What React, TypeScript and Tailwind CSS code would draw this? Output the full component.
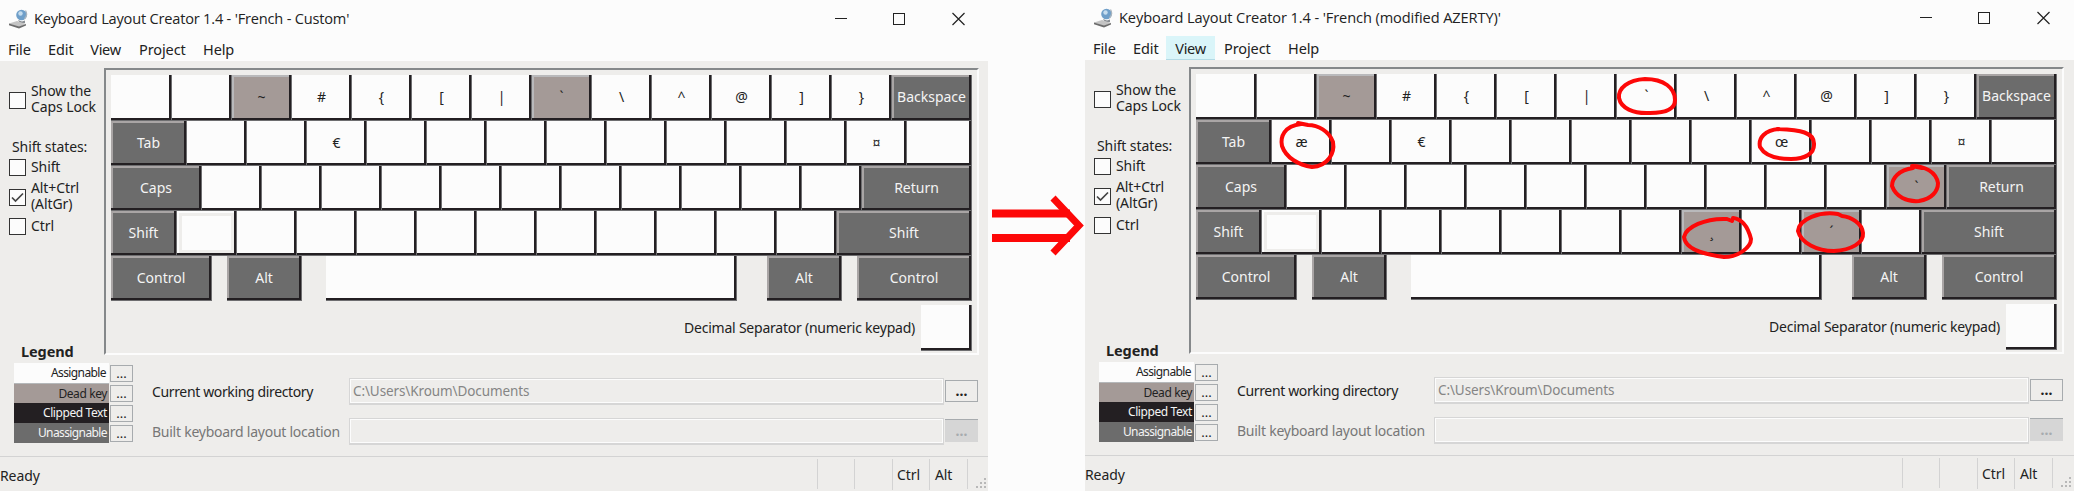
import React from "react";

type Kind = "n" | "dead" | "dark" | "focus" | "gap";
type K = { w: number; t?: string; k?: Kind; tall?: boolean };

const kinds: Record<Kind, string> = {
  n: "bg-[#fcfcfc] border-[#fcfcfc] text-[#222] text-[14px]",
  dead: "bg-[#a49a97] border-[#b9b9bb] text-[#222] text-[14px]",
  dark: "bg-[#6c6c6c] border-[#a9a5a5] text-[#f4f4f4] text-[14px]",
  focus: "bg-[#fcfcfc] border-[#fcfcfc]",
  gap: "",
};

function Key({ w, t, k = "n", tall }: K) {
  if (k === "gap") return <div className="shrink-0" style={{ width: w }} />;
  return (
    <div
      className={`flex shrink-0 border-r border-b border-[#6e6e70] ${tall ? "h-[46px]" : "h-[45px]"}`}
      style={{ width: w }}
    >
      <div className="flex min-w-0 flex-1 border-r-2 border-b-2 border-[#231f22]">
        <div
          className={`flex min-w-0 flex-1 items-center justify-center border-t-2 border-l-2 leading-none ${kinds[k]}`}
        >
          {k === "focus" ? (
            <div className="h-full flex-1 border-[3px] border-[#eeedeb]" />
          ) : (
            <span className="-mt-px whitespace-pre">{t}</span>
          )}
        </div>
      </div>
    </div>
  );
}

function fill(n: number, at: Record<number, [string, Kind?]> = {}): K[] {
  return Array.from({ length: n }, (_, i) => ({ w: 60, t: at[i]?.[0], k: at[i]?.[1] }));
}

function Box({ checked, className = "" }: { checked?: boolean; className?: string }) {
  return (
    <div className={`flex h-[17px] w-[17px] shrink-0 items-center justify-center border-[1.5px] border-[#333] bg-[#fcfcfc] ${className}`}>
      {checked && (
        <svg width="13" height="11" viewBox="0 0 13 11" fill="none" stroke="#444" strokeWidth="1.7">
          <path d="M1 5.5 4.500 9 12 1.500" />
        </svg>
      )}
    </div>
  );
}

function AppIcon() {
  return (
    <svg width="20" height="20" viewBox="0 0 20 20">
      <circle cx="12.500" cy="6" r="5.300" fill="#6f9fc9" />
      <circle cx="11.500" cy="4.500" r="2.200" fill="#c5dcee" />
      <path d="M16.500 1.500q2.700 4.500-1 8.500" stroke="#a9b4be" fill="none" strokeWidth="1.3" />
      <path d="M9 11l4 1.500 3-1v2.500l-5 .5z" fill="#8a8f94" />
      <path d="M0 14.500 8 12l9 3-7 3.200z" fill="#c4c4c4" />
      <path d="M0 14.500 10 17.600l7-2.600v1.600L10 19.400 0 16.200z" fill="#6d6d6d" />
    </svg>
  );
}

const legend = [
  ["Assignable", "bg-[#fcfcfc] text-[#222] pr-[3px] tracking-[-0.6px]"],
  ["Dead key", "bg-[#a49a97] text-[#222] border-t border-[#b5b8ba] pr-[2px] tracking-[-0.4px]"],
  ["Clipped Text", "bg-[#231f22] text-[#f4f4f4] pr-[2px] tracking-[-0.4px]"],
  ["Unassignable", "bg-[#6c6c6c] text-[#f4f4f4] pr-[2px] tracking-[-0.6px]"],
];

type WinProps = { title: string; modified?: boolean };

function Window({ title, modified }: WinProps) {
  const rows: K[][] = [
    [
      ...fill(13, {
        2: ["~", "dead"], 3: ["#"], 4: ["{"], 5: ["["], 6: ["|"], 7: ["`", modified ? "n" : "dead"],
        8: ["\\"], 9: ["^"], 10: ["@"], 11: ["]"], 12: ["}"],
      }),
      { w: 80, t: "Backspace", k: "dark" },
    ],
    [
      { w: 75, t: "Tab", k: "dark" },
      ...fill(12, { 0: [modified ? "æ" : ""], 2: ["€"], 8: [modified ? "œ" : ""], 11: ["¤"] }),
      { w: 65 },
    ],
    [
      { w: 90, t: "Caps", k: "dark" },
      ...fill(11, modified ? { 10: ["`", "dead"] } : {}),
      { w: 110, t: "Return", k: "dark" },
    ],
    [
      { w: 65, t: "Shift", k: "dark" },
      ...fill(11, modified ? { 0: ["", "focus"], 7: ["¸", "dead"], 9: ["´", "dead"] } : { 0: ["", "focus"] }),
      { w: 135, t: "Shift", k: "dark" },
    ],
    [
      { w: 100, t: "Control", k: "dark" }, { w: 15, k: "gap" }, { w: 75, t: "Alt", k: "dark" },
      { w: 24, k: "gap" }, { w: 411 }, { w: 30, k: "gap" }, { w: 75, t: "Alt", k: "dark" },
      { w: 15, k: "gap" }, { w: 115, t: "Control", k: "dark" },
    ],
  ];
  return (
    <div className={`flex h-[492px] shrink-0 flex-col bg-[#eeedeb] text-[#222] ${modified ? "w-[989px]" : "w-[988px]"}`}>
      <div className="flex h-[61px] flex-col bg-[#fcfcfc]">
        <div className="flex h-[37px] w-[988px] items-center pl-[9px]">
          <AppIcon />
          <div className={`ml-[5px] flex-1 whitespace-nowrap font-['Open_Sans',sans-serif] text-[14.600px] ${modified ? "tracking-[-0.1px]" : "tracking-[-0.2px]"}`}>{title}</div>
          <svg width="130" height="14" viewBox="0 0 130 14" className="mr-[23px]" fill="none" stroke="#222" shapeRendering="crispEdges">
            <path d="M0 6.5h12M58.500 1.500h11v11h-11z" />
            <path d="M117.500 1l12 12M129.500 1l-12 12" shapeRendering="auto" strokeWidth="1.2" />
          </svg>
        </div>
        <div className="flex h-6 items-center font-['Noto_Sans',sans-serif] text-[14.500px] tracking-[-0.1px]">
          <div className="w-[40px] pt-[2px] pl-2">File</div>
          <div className="w-[41px] pt-[2px] pl-2">Edit</div>
          <div className={`flex h-6 w-[49px] items-center justify-center pt-[2px] ${modified ? "border-b border-[#b4dbe6] bg-[#daf5f9]" : ""}`}><span className="tracking-[-0.3px]">View</span></div>
          <div className="w-[65px] pt-[2px] pl-[9px]">Project</div>
          <div className="pt-[2px] pl-2">Help</div>
        </div>
      </div>

      <div className="flex h-[294px]">
        <div className="flex w-[104px] shrink-0 flex-col pl-[9px] text-[14px] leading-4 tracking-[-0.1px]">
          <div className="mt-[21px] flex items-center gap-[5px]">
            <Box className="mt-1" />
            <div className="mt-px -mb-px whitespace-nowrap">Show the<br />Caps Lock</div>
          </div>
          <div className="mt-[25px] pl-[3px]">Shift states:</div>
          <div className="mt-[4px] flex items-center gap-[5px]"><Box /><span className="-mt-px">Shift</span></div>
          <div className="mt-[4px] flex items-center gap-[5px]">
            <Box checked className="mt-[3px]" />
            <div>Alt+Ctrl<br />(AltGr)</div>
          </div>
          <div className="mt-[6px] flex items-center gap-[5px]"><Box /><span className="-mt-px">Ctrl</span></div>
          <div className="mt-auto -mb-[4px] pl-[12px] text-[14.500px] font-bold">Legend</div>
        </div>
        <div className="mt-[7px] flex w-[875px] shrink-0 flex-col border-t-2 border-r-2 border-b-2 border-l-2 border-t-[#85888a] border-r-[#fcfcfc] border-b-[#fcfcfc] border-l-[#85888a] pt-[5px] pl-[5px]">
          {rows.map((r, i) => (
            <div key={i} className="flex">
              {r.map((k, j) => <Key key={j} {...k} w={j === 0 ? k.w + 1 : k.w} tall={i === 0} />)}
            </div>
          ))}
          <div className="mt-[4px] flex items-center justify-end gap-[6px] pr-[5px]">
            <span className="-mt-[2px] text-[14px] tracking-[-0.23px]">Decimal Separator (numeric keypad)</span>
            <Key w={51} tall />
          </div>
        </div>
      </div>

      <div className="flex h-[101px] pl-[14px]">
        <div className="mt-[8px] flex shrink-0 flex-col">
          {legend.map(([t, c]) => (
            <div key={t} className="flex h-5">
              <div className={`flex w-[95px] items-center justify-end text-[12px] ${c}`}>{t}</div>
              <div className="mt-[2px] ml-px flex h-[17px] w-[23px] items-center justify-center border border-[#a7abae] text-[13px]">...</div>
            </div>
          ))}
        </div>
        <div className="ml-[19px] w-[197px] shrink-0 text-[14px] leading-5">
          <div className="mt-[27px] tracking-[-0.36px] whitespace-nowrap">Current working directory</div>
          <div className="mt-[20px] tracking-[-0.25px] whitespace-nowrap text-[#777]">Built keyboard layout location</div>
        </div>
        <div className="shrink-0 text-[13.500px] tracking-[-0.1px]">
          <div className="mt-[23px] flex h-[27px] w-[595px] items-center border border-b-2 border-[#d6d6d6] pl-[3px] text-[#858585] shadow-[inset_0_0_0_1px_#fcfcfc]">C:\Users\Kroum\Documents</div>
          <div className="mt-[13px] h-[27px] w-[595px] border border-b-2 border-[#d6d6d6] shadow-[inset_0_0_0_1px_#fcfcfc]" />
        </div>
        <div className="ml-px">
          <div className="mt-[25px] flex h-[22px] w-[33px] items-center justify-center border border-[#a7abae] text-[14px] font-bold leading-none">...</div>
          <div className="mt-[17px] flex h-[23px] w-[33px] items-center justify-center border-t border-[#a7abae] bg-[#d6d6d6] text-[14px] font-bold leading-none text-[#a7abae]">...</div>
        </div>
      </div>

      <div className="flex h-[36px] border-t border-[#d3d3d3] pt-[2px] text-[14px] tracking-[-0.1px]">
        <div className="flex h-[32px] w-[817px] items-center">Ready</div>
        <div className="h-[30px] w-[37px] border-l border-[#d3d3d3]" />
        <div className="h-[30px] w-[38px] border-l border-[#d3d3d3]" />
        <div className="flex h-[31px] w-[37px] items-center border-l border-[#d3d3d3] pl-[4px]">Ctrl</div>
        <div className="flex h-[31px] w-[38px] items-center border-l border-[#d3d3d3] pl-[5px]">Alt</div>
        <div className="flex h-[30px] w-[21px] items-end justify-end border-l border-[#d3d3d3]">
          <svg width="12" height="11" viewBox="0 0 12 11" fill="#b8b8b8">
            <path d="M8 0h2v2h-2zM8 4h2v2h-2zM8 8h2v2h-2zM4 4h2v2h-2zM4 8h2v2h-2zM0 8h2v2h-2z" />
          </svg>
        </div>
      </div>
    </div>
  );
}

export default function App() {
  return (
    <div className="relative flex h-[491px] w-[2074px] overflow-hidden bg-[#fcfcfc] font-['Noto_Sans',sans-serif]">
      <Window title="Keyboard Layout Creator 1.4 - 'French - Custom'" />
      <div className="flex w-[97px] shrink-0 items-start pt-[195px] pl-[4px]">
        <svg width="92" height="62" viewBox="0 0 92 62" fill="none" stroke="#fd0808" strokeWidth="8">
          <path d="M0 18.500H78M0 43H78" />
          <path d="M61 3L87 30.500L61 58" strokeWidth="7" />
        </svg>
      </div>
      <div className="-mt-px shrink-0">
        <Window title="Keyboard Layout Creator 1.4 - 'French (modified AZERTY)'" modified />
      </div>
      <svg className="pointer-events-none absolute inset-0" width="2074" height="491" viewBox="0 0 2074 491" fill="none" stroke="#fd0808" strokeWidth="4" strokeLinecap="round" strokeLinejoin="round">
        <path d="M1301 124C1284 126 1280 137 1282 146C1286 158 1299 165 1312 167C1328 166 1335 153 1333 142C1329 131 1318 125 1308 125L1298 123" />
        <path d="M1619 98C1618 88 1628 80 1645 79C1664 79 1675 88 1675 100C1675 110 1663 113 1650 113C1633 114 1621 108 1619 98" />
        <path d="M1779 129C1765 130 1758 138 1760 147C1765 156 1778 159 1791 159C1806 159 1814 153 1814 145C1815 132 1800 130 1777 129" />
        <path d="M1913 168C1899 170 1892 178 1892 186C1896 197 1907 202 1919 201C1932 199 1938 191 1938 183C1936 172 1925 166 1912 166L1922 168" />
        <path d="M1732 221L1727 219C1705 218 1686 227 1684 237C1685 248 1700 254 1724 257C1739 257 1751 247 1751 239C1748 227 1742 219 1733 218" />
        <path d="M1842 216L1838 214C1820 211 1799 219 1798 231C1801 243 1817 251 1834 251C1851 250 1864 243 1863 233C1862 223 1851 217 1842 216" />
      </svg>
    </div>
  );
}
